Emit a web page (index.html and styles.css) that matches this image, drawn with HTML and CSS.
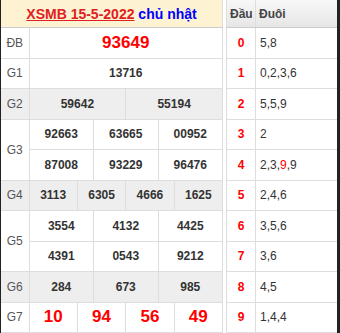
FILE: index.html
```html
<!DOCTYPE html>
<html lang="vi">
<head>
    <meta charset="UTF-8">
    <meta name="viewport" content="width=device-width, initial-scale=1.0">
    <title>XSMB 15-5-2022</title>
    <link rel="stylesheet" href="styles.css">
</head>
<body>
    <div class="board">
        <table class="results">
            <colgroup>
                <col class="label-col">
                <col><col><col><col><col><col><col><col><col><col><col><col>
            </colgroup>
            <thead>
                <tr>
                    <th colspan="13" class="title">
                        <a href="#">XSMB 15-5-2022</a> <span class="day">chủ nhật</span>
                    </th>
                </tr>
            </thead>
            <tbody>
                <tr>
                    <td class="label">ĐB</td>
                    <td colspan="12" class="big">93649</td>
                </tr>
                <tr>
                    <td class="label">G1</td>
                    <td colspan="12">13716</td>
                </tr>
                <tr class="shade">
                    <td class="label">G2</td>
                    <td colspan="6">59642</td>
                    <td colspan="6">55194</td>
                </tr>
                <tr>
                    <td class="label" rowspan="2">G3</td>
                    <td colspan="4">92663</td>
                    <td colspan="4">63665</td>
                    <td colspan="4">00952</td>
                </tr>
                <tr>
                    <td colspan="4">87008</td>
                    <td colspan="4">93229</td>
                    <td colspan="4">96476</td>
                </tr>
                <tr class="shade">
                    <td class="label">G4</td>
                    <td colspan="3">3113</td>
                    <td colspan="3">6305</td>
                    <td colspan="3">4666</td>
                    <td colspan="3">1625</td>
                </tr>
                <tr>
                    <td class="label" rowspan="2">G5</td>
                    <td colspan="4">3554</td>
                    <td colspan="4">4132</td>
                    <td colspan="4">4425</td>
                </tr>
                <tr>
                    <td colspan="4">4391</td>
                    <td colspan="4">0543</td>
                    <td colspan="4">9212</td>
                </tr>
                <tr class="shade">
                    <td class="label">G6</td>
                    <td colspan="4">284</td>
                    <td colspan="4">673</td>
                    <td colspan="4">985</td>
                </tr>
                <tr>
                    <td class="label">G7</td>
                    <td colspan="3" class="big">10</td>
                    <td colspan="3" class="big">94</td>
                    <td colspan="3" class="big">56</td>
                    <td colspan="3" class="big">49</td>
                </tr>
            </tbody>
        </table>

        <table class="loto">
            <thead>
                <tr>
                    <th class="head-col">Đầu</th>
                    <th class="tail-col">Đuôi</th>
                </tr>
            </thead>
            <tbody>
                <tr><td class="head">0</td><td>5,8</td></tr>
                <tr><td class="head">1</td><td>0,2,3,6</td></tr>
                <tr><td class="head">2</td><td>5,5,9</td></tr>
                <tr><td class="head">3</td><td>2</td></tr>
                <tr><td class="head">4</td><td>2,3,<span class="hit">9</span>,9</td></tr>
                <tr><td class="head">5</td><td>2,4,6</td></tr>
                <tr><td class="head">6</td><td>3,5,6</td></tr>
                <tr><td class="head">7</td><td>3,6</td></tr>
                <tr><td class="head">8</td><td>4,5</td></tr>
                <tr><td class="head">9</td><td>1,4,4</td></tr>
            </tbody>
        </table>
    </div>
</body>
</html>
```

FILE: styles.css
```css
:root {
    --red: #ff0000;
    --blue: #0000ff;
    --text: #333;
    --muted: #555;
    --line: #ddd;
    --frame: #222;
    --cream: #fdf3d3;
    --shade: #eeeeee;
}

body {
    font-family: "Liberation Sans", Arial, sans-serif;
    margin: 0;
    padding: 0;
    background: white;
    overflow: hidden;
}

.board {
    display: flex;
    gap: 3px;
    width: 340px;
    border-left: 1px solid var(--frame);
    border-right: 3px solid var(--frame);
    box-sizing: border-box;
}

table {
    border-collapse: collapse;
    table-layout: fixed;
}

td, th {
    padding: 0;
    text-align: center;
    border: 1px solid var(--line);
    height: 29.5px;
    font-size: 12px;
}

thead th {
    height: 27px;
    border-top: none;
    border-bottom: 1px solid #ccc;
}

/* results table */
.results {
    width: 222px;
}

.results td:first-child,
.results th:first-child {
    border-left: none;
}

.label-col {
    width: 28px;
}

.title {
    background: var(--cream);
    font-size: 14px;
    font-weight: bold;
}

.title a {
    color: #e02020;
    text-decoration: underline;
}

.title .day {
    color: var(--blue);
}

.results td {
    font-weight: bold;
    color: var(--text);
}

.results td.label {
    color: var(--muted);
    font-weight: normal;
}

.results td.big {
    color: var(--red);
    font-size: 17px;
}

.shade td {
    background: var(--shade);
}

/* loto table */
.loto {
    width: 111px;
}

.loto th {
    background: linear-gradient(#f7f7f7, #e6e6e6);
    color: #444;
    font-weight: bold;
    font-size: 12px;
    text-align: left;
    padding-left: 3px;
}

.loto td:last-child,
.loto th:last-child {
    border-right: none;
}

.head-col {
    width: 25px;
}

.loto td {
    text-align: left;
    padding-left: 4px;
    color: var(--text);
    font-size: 12px;
}

.loto td.head {
    text-align: center;
    padding-left: 0;
    color: var(--red);
    font-weight: bold;
}

.hit {
    color: var(--red);
}
```
